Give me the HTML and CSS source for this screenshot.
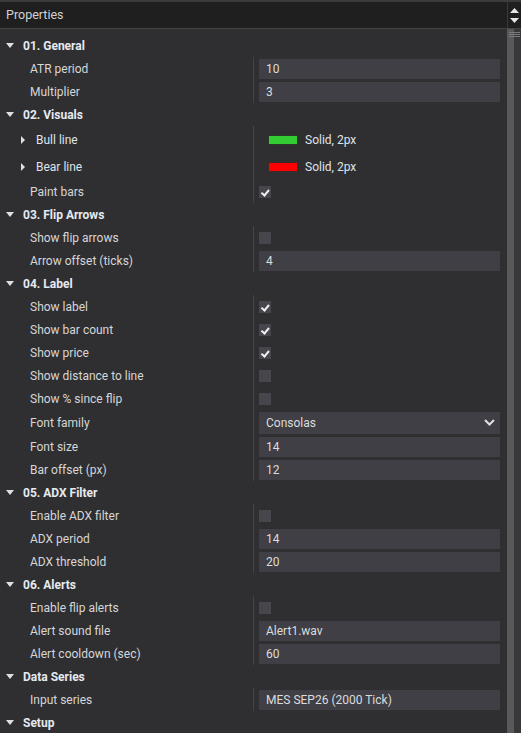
FILE: index.html
```html
<!DOCTYPE html>
<html lang="en">
<head>
  <meta charset="UTF-8">
  <title>Properties</title>
  <link rel="stylesheet" href="styles.css">
</head>
<body>
  <div class="panel">
    <div class="titlebar">
      <span class="title">Properties</span>
      <div class="spin">
        <svg width="9" height="5" viewBox="0 0 9 5"><polygon points="4.5,0 9,5 0,5" fill="#e6e6e6"/></svg>
        <svg width="9" height="5" viewBox="0 0 9 5"><polygon points="0,0 9,0 4.5,5" fill="#e6e6e6"/></svg>
      </div>
    </div>

    <div class="body">
      <div class="list">

        <div class="section"><span class="caret"></span>01. General</div>
        <div class="row"><div class="label">ATR period</div><div class="value"><div class="input">10</div></div></div>
        <div class="row"><div class="label">Multiplier</div><div class="value"><div class="input">3</div></div></div>

        <div class="section"><span class="caret"></span>02. Visuals</div>
        <div class="row tall"><div class="label sub"><span class="caret-right"></span>Bull line</div><div class="value"><span class="swatch green"></span><span class="stroke">Solid, 2px</span></div></div>
        <div class="row tall"><div class="label sub"><span class="caret-right"></span>Bear line</div><div class="value"><span class="swatch red"></span><span class="stroke">Solid, 2px</span></div></div>
        <div class="row"><div class="label">Paint bars</div><div class="value"><span class="check on"></span></div></div>

        <div class="section"><span class="caret"></span>03. Flip Arrows</div>
        <div class="row"><div class="label">Show flip arrows</div><div class="value"><span class="check"></span></div></div>
        <div class="row"><div class="label">Arrow offset (ticks)</div><div class="value"><div class="input">4</div></div></div>

        <div class="section"><span class="caret"></span>04. Label</div>
        <div class="row"><div class="label">Show label</div><div class="value"><span class="check on"></span></div></div>
        <div class="row"><div class="label">Show bar count</div><div class="value"><span class="check on"></span></div></div>
        <div class="row"><div class="label">Show price</div><div class="value"><span class="check on"></span></div></div>
        <div class="row"><div class="label">Show distance to line</div><div class="value"><span class="check"></span></div></div>
        <div class="row"><div class="label">Show % since flip</div><div class="value"><span class="check"></span></div></div>
        <div class="row select-row"><div class="label">Font family</div><div class="value"><div class="input select">Consolas<svg width="11" height="7" viewBox="0 0 11 7"><polyline points="1,1 5.5,5.5 10,1" fill="none" stroke="#e0e0e0" stroke-width="2"/></svg></div></div></div>
        <div class="row"><div class="label">Font size</div><div class="value"><div class="input">14</div></div></div>
        <div class="row"><div class="label">Bar offset (px)</div><div class="value"><div class="input">12</div></div></div>

        <div class="section"><span class="caret"></span>05. ADX Filter</div>
        <div class="row"><div class="label">Enable ADX filter</div><div class="value"><span class="check"></span></div></div>
        <div class="row"><div class="label">ADX period</div><div class="value"><div class="input">14</div></div></div>
        <div class="row"><div class="label">ADX threshold</div><div class="value"><div class="input">20</div></div></div>

        <div class="section"><span class="caret"></span>06. Alerts</div>
        <div class="row"><div class="label">Enable flip alerts</div><div class="value"><span class="check"></span></div></div>
        <div class="row"><div class="label">Alert sound file</div><div class="value"><div class="input">Alert1.wav</div></div></div>
        <div class="row"><div class="label">Alert cooldown (sec)</div><div class="value"><div class="input">60</div></div></div>

        <div class="section"><span class="caret"></span>Data Series</div>
        <div class="row"><div class="label">Input series</div><div class="value"><div class="input">MES SEP26 (2000 Tick)</div></div></div>

        <div class="section"><span class="caret"></span>Setup</div>

      </div>

      <div class="scrollbar">
        <div class="thumb">
          <div class="grip"></div>
          <div class="grip"></div>
          <div class="grip"></div>
        </div>
      </div>
    </div>
  </div>
</body>
</html>
```

FILE: styles.css
```css
:root {
  --bg: #2f2f32;
  --bg-title: #1f1f1f;
  --border: #444447;
  --field: #3f3f45;
  --text: #d6d6d6;
  --heading: #e6eaf0;
}

* {
  margin: 0;
  padding: 0;
  box-sizing: border-box;
}

html, body {
  height: 100%;
}

body {
  font-family: Roboto, "Liberation Sans", sans-serif;
  font-size: 12px;
  color: var(--text);
  background-color: var(--bg);
  overflow: hidden;
}

.panel {
  height: 100%;
  display: flex;
  flex-direction: column;
  border-top: 2px solid #3b3b3d;
}

.titlebar {
  display: flex;
  height: 27px;
  background-color: var(--bg-title);
  border-bottom: 1px solid var(--border);
}

.title {
  flex: 1;
  padding-left: 6px;
  line-height: 26px;
  font-size: 12.5px;
  color: #d2d2d2;
}

.spin {
  width: 14px;
  border-left: 1px solid #3a3a3c;
  display: flex;
  flex-direction: column;
  align-items: center;
  justify-content: space-around;
  padding: 4px 0 3px;
}

.body {
  flex: 1;
  display: flex;
  min-height: 0;
}

.list {
  flex: 1;
  padding-top: 5px;
}

/* section headers */
.section {
  height: 23px;
  display: flex;
  align-items: center;
  padding-left: 6px;
  font-weight: 700;
  color: var(--heading);
}

.caret {
  width: 0;
  height: 0;
  border-left: 4.5px solid transparent;
  border-right: 4.5px solid transparent;
  border-top: 5px solid #e0e0e0;
  margin-right: 9px;
}

.caret-right {
  width: 0;
  height: 0;
  border-top: 4px solid transparent;
  border-bottom: 4px solid transparent;
  border-left: 4px solid #e0e0e0;
  margin-right: 11px;
}

/* property rows */
.row {
  height: 23px;
  display: grid;
  grid-template-columns: 253px 1fr;
}

.row.tall {
  height: 27px;
}

.row.select-row {
  height: 25px;
}

.label {
  display: flex;
  align-items: center;
  padding-left: 30px;
}

.label.sub {
  padding-left: 21px;
  color: #dfe3ea;
}

.value {
  display: flex;
  align-items: center;
  border-left: 1px solid var(--border);
  padding: 0 7px 0 5px;
}

.input {
  flex: 1;
  height: 20px;
  line-height: 20px;
  padding-left: 7px;
  background-color: var(--field);
  color: #dcdcdc;
}

.input.select {
  height: 22px;
  display: flex;
  align-items: center;
  justify-content: space-between;
  padding-right: 5px;
}

.check {
  width: 12px;
  height: 12px;
  background-color: #46464c;
  position: relative;
}

.check.on::after {
  content: "";
  position: absolute;
  left: 4px;
  top: 2px;
  width: 2.5px;
  height: 5.5px;
  border-right: 2px solid #f0f0f0;
  border-bottom: 2px solid #f0f0f0;
  transform: rotate(40deg);
}

.swatch {
  width: 30px;
  height: 10px;
  margin-left: 9px;
  margin-right: 7px;
  border: 1px solid #2a3a2a;
}

.swatch.green {
  background-color: #33cc33;
}

.swatch.red {
  background-color: #ff0000;
  border-color: #3a2a2a;
}

.stroke {
  color: #dfe3ea;
}

/* scrollbar */
.scrollbar {
  width: 14px;
  display: flex;
  background-color: #38383b;
}

.thumb {
  width: 7px;
  background-color: #59595c;
  display: flex;
  flex-direction: column;
  gap: 1px;
  padding-top: 3px;
}

.grip {
  width: 11px;
  margin-left: 2px;
  height: 1px;
  background-color: #7a7a7d;
}
```
